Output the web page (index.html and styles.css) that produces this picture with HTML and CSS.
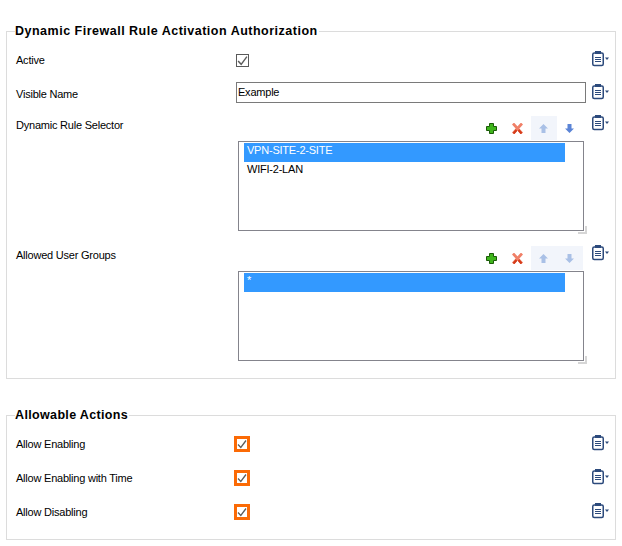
FILE: index.html
```html
<!DOCTYPE html>
<html lang="en">
  <head>
    <meta charset="UTF-8" />
    <title>Dynamic Firewall Rule Activation Authorization</title>
    <link rel="stylesheet" href="styles.css">
  </head>
  <body>
    <svg class="defs" width="0" height="0">
      <symbol id="clip" viewBox="0 0 17 16">
        <rect x="0.750" y="2" width="10.500" height="12.500" rx="1.500" fill="#fff" stroke="#2c4a7c" stroke-width="1.500" />
        <rect x="3" y="0" width="6" height="3" fill="#2c4a7c" />
        <path d="M3 6.500h6M3 8.500h6M3 10.500h6" stroke="#2c4a7c" fill="none" />
        <path d="M13 6.500h4l-2 2.500z" fill="#2c4a7c" />
      </symbol>
      <symbol id="plus" viewBox="0 0 11 11">
        <path d="M3.500.5h4v3h3v4h-3v3h-4v-3h-3v-4h3z" fill="#3fb51c" stroke="#1a5c08" />
      </symbol>
      <symbol id="cross" viewBox="0 0 11 11">
        <path d="M1 .5l9 10M10 .5l-9 10" stroke="#f08068" stroke-width="2.800" fill="none" />
        <path d="M1.500 10.500l3-3.500M6.500 7l3 3.500" stroke="#d43c1a" stroke-width="2.200" fill="none" />
      </symbol>
      <symbol id="up" viewBox="0 0 11 11">
        <path d="M5.500 1l4.500 4.500h-2.500v4.500h-4v-4.500h-2.500z" fill="currentColor" />
      </symbol>
      <symbol id="down" viewBox="0 0 11 11">
        <path d="M5.500 10l4.500-4.500h-2.500v-4.500h-4v4.500h-2.500z" fill="currentColor" />
      </symbol>
      <symbol id="tick" viewBox="1 1 10 10">
        <path d="M2 6.500l2.800 3 5.200-7" stroke="#5c5c5c" stroke-width="1.300" fill="none" />
      </symbol>
    </svg>

    <fieldset class="group group-main">
      <legend>Dynamic Firewall Rule Activation Authorization</legend>

      <div class="row row-active">
        <span class="label">Active</span>
        <div class="value"><span class="check"><svg><use href="#tick" /></svg></span></div>
        <svg class="clip"><use href="#clip" /></svg>
      </div>

      <div class="row row-name">
        <span class="label">Visible Name</span>
        <div class="value"><input class="text" type="text" value="Example" /></div>
        <svg class="clip"><use href="#clip" /></svg>
      </div>

      <div class="row row-list">
        <span class="label label-list">Dynamic Rule Selector</span>
        <div class="value">
          <div class="toolbar">
            <span class="tool"><svg><use href="#plus" /></svg></span>
            <span class="tool"><svg><use href="#cross" /></svg></span>
            <span class="tool tool-off"><svg><use href="#up" /></svg></span>
            <span class="tool tool-down"><svg><use href="#down" /></svg></span>
          </div>
          <div class="list">
            <div class="item selected">VPN-SITE-2-SITE</div>
            <div class="item">WIFI-2-LAN</div>
            <span class="grip"></span>
          </div>
        </div>
        <svg class="clip"><use href="#clip" /></svg>
      </div>

      <div class="row row-list row-groups">
        <span class="label label-list">Allowed User Groups</span>
        <div class="value">
          <div class="toolbar">
            <span class="tool"><svg><use href="#plus" /></svg></span>
            <span class="tool"><svg><use href="#cross" /></svg></span>
            <span class="tool tool-off"><svg><use href="#up" /></svg></span>
            <span class="tool tool-off"><svg><use href="#down" /></svg></span>
          </div>
          <div class="list">
            <div class="item selected">*</div>
            <span class="grip"></span>
          </div>
        </div>
        <svg class="clip"><use href="#clip" /></svg>
      </div>
    </fieldset>

    <fieldset class="group group-actions">
      <legend>Allowable Actions</legend>

      <div class="row row-action">
        <span class="label">Allow Enabling</span>
        <div class="value"><span class="check check-marked"><svg><use href="#tick" /></svg></span></div>
        <svg class="clip"><use href="#clip" /></svg>
      </div>
      <div class="row row-action">
        <span class="label">Allow Enabling with Time</span>
        <div class="value"><span class="check check-marked"><svg><use href="#tick" /></svg></span></div>
        <svg class="clip"><use href="#clip" /></svg>
      </div>
      <div class="row row-action">
        <span class="label">Allow Disabling</span>
        <div class="value"><span class="check check-marked"><svg><use href="#tick" /></svg></span></div>
        <svg class="clip"><use href="#clip" /></svg>
      </div>
    </fieldset>
  </body>
</html>
```

FILE: styles.css
```css
body {
  margin: 0;
  padding: 23px 6px 0 6px;
  background-color: #fff;
  color: #000;
  font-family: "Liberation Sans", Arial, sans-serif;
  font-size: 11px;
  letter-spacing: -0.22px;
}

.defs {
  display: block;
  height: 0;
}

.group {
  margin: 0;
  padding: 7px 0 17px 9px;
  width: 610px;
  box-sizing: border-box;
  border: 1px solid #dcdcdc;
}

.group-actions {
  margin-top: 28px;
  padding-top: 4px;
  padding-bottom: 10px;
}

.group legend {
  padding: 0 1px 0 0;
  margin-left: -1px;
  font-size: 12.5px;
  line-height: 16px;
  font-weight: bold;
  letter-spacing: 0.5px;
}

.group-actions legend {
  letter-spacing: 0.35px;
}

.row {
  display: flex;
  align-items: center;
}

.row-active {
  height: 28px;
}

.row-name {
  height: 28px;
  margin-top: 5px;
}

.row-name .label {
  margin-top: 2px;
}

.row-name .value {
  margin-bottom: 1px;
}

.row-list {
  align-items: flex-start;
  margin-top: 9px;
}

.row-groups {
  margin-top: 15px;
}

.row-action {
  height: 34px;
}

.label {
  width: 220px;
  flex: none;
}

.label-list {
  line-height: 14px;
  margin-top: 2px;
}

.value {
  width: 350px;
  flex: none;
}

.clip {
  width: 17px;
  height: 16px;
  margin-left: 6px;
  margin-bottom: 3px;
  flex: none;
}

.row-list .clip {
  margin-top: -1px;
  margin-bottom: 0;
}

.check {
  display: block;
  width: 11px;
  height: 11px;
  border: 1px solid #5a5a5a;
  background-color: #fff;
}

.check svg {
  display: block;
  width: 11px;
  height: 11px;
}

.check-marked {
  width: 10px;
  height: 10px;
  margin-left: -2px;
  border: 3px solid #fb6a05;
}

.check-marked svg {
  width: 10px;
  height: 10px;
}

.text {
  display: block;
  width: 100%;
  height: 21px;
  box-sizing: border-box;
  padding: 0 2px 2px 1px;
  border: 1px solid #7a7a7a;
  font-family: inherit;
  font-size: 11px;
  letter-spacing: -0.22px;
  color: #000;
}

.toolbar {
  display: flex;
  justify-content: flex-end;
  height: 24px;
  padding-right: 3px;
}

.tool {
  display: flex;
  align-items: center;
  justify-content: center;
  width: 26px;
}

.tool svg {
  width: 11px;
  height: 11px;
  margin-top: 1px;
  margin-right: 1px;
}

.tool-off {
  background-color: #f2f5fb;
  color: #a9c0e6;
}

.tool-down {
  color: #5b84d6;
}

.list {
  position: relative;
  box-sizing: border-box;
  width: 346px;
  height: 90px;
  margin-top: 1px;
  margin-left: 2px;
  padding: 1px 18px 0 5px;
  border: 1px solid #84848c;
  background-color: #fff;
}

.item {
  height: 19px;
  line-height: 15px;
  padding-left: 3px;
}

.selected {
  background-color: #3399ff;
  color: #fff;
}

/* sits over the bottom right corner of the list */
.grip {
  position: absolute;
  right: -4px;
  bottom: -4px;
  width: 9px;
  height: 8px;
  box-sizing: border-box;
  border-right: 2px solid #d6d6d6;
  border-bottom: 2px solid #d6d6d6;
}
```
